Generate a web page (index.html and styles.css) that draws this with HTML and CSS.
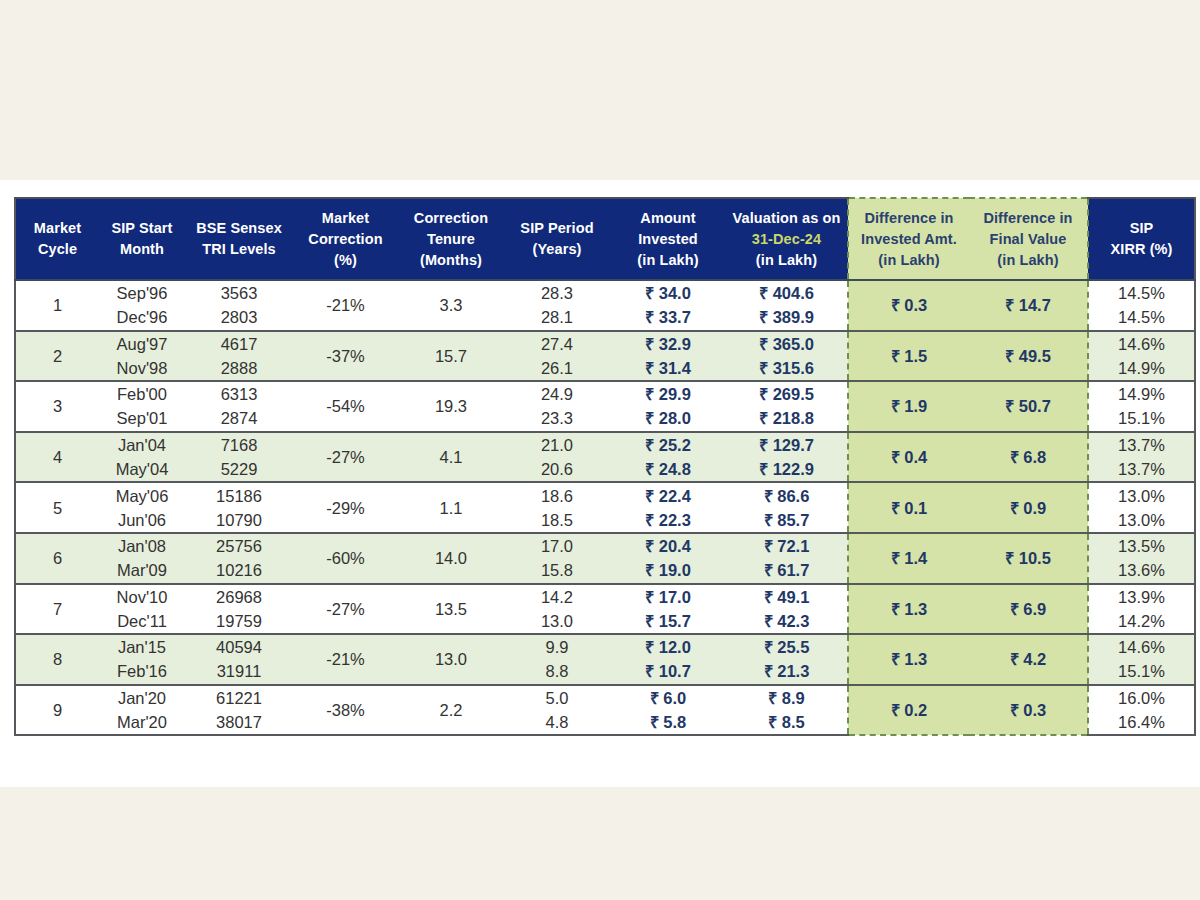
FILE: index.html
```html
<!DOCTYPE html>
<html>
<head>
<meta charset="utf-8">
<link rel="stylesheet" href="styles.css">
</head>
<body>
<div class="band top"></div>
<main class="sheet">
<table class="sip">
<colgroup>
<col style="width:84px"><col style="width:86px"><col style="width:108px"><col style="width:105px"><col style="width:106px"><col style="width:106px"><col style="width:116px"><col style="width:122px"><col style="width:121px"><col style="width:119px"><col style="width:107px">
</colgroup>
<thead>
<tr>
<th class="first">Market<br>Cycle</th>
<th>SIP Start<br>Month</th>
<th>BSE Sensex<br>TRI Levels</th>
<th>Market<br>Correction<br>(%)</th>
<th>Correction<br>Tenure<br>(Months)</th>
<th>SIP Period<br>(Years)</th>
<th>Amount<br>Invested<br>(in Lakh)</th>
<th>Valuation as on<br><span class="date">31-Dec-24</span><br>(in Lakh)</th>
<th class="hl hl-l">Difference in<br>Invested Amt.<br>(in Lakh)</th>
<th class="hl hl-r">Difference in<br>Final Value<br>(in Lakh)</th>
<th class="last">SIP<br>XIRR (%)</th>
</tr>
</thead>
<tbody>
<tr><td class="first">1</td><td>Sep'96<br>Dec'96</td><td>3563<br>2803</td><td>-21%</td><td>3.3</td><td>28.3<br>28.1</td><td class="amt">₹ 34.0<br>₹ 33.7</td><td class="amt">₹ 404.6<br>₹ 389.9</td><td class="hl hl-l amt">₹ 0.3</td><td class="hl hl-r amt">₹ 14.7</td><td class="last">14.5%<br>14.5%</td></tr>
<tr class="alt"><td class="first">2</td><td>Aug'97<br>Nov'98</td><td>4617<br>2888</td><td>-37%</td><td>15.7</td><td>27.4<br>26.1</td><td class="amt">₹ 32.9<br>₹ 31.4</td><td class="amt">₹ 365.0<br>₹ 315.6</td><td class="hl hl-l amt">₹ 1.5</td><td class="hl hl-r amt">₹ 49.5</td><td class="last">14.6%<br>14.9%</td></tr>
<tr><td class="first">3</td><td>Feb'00<br>Sep'01</td><td>6313<br>2874</td><td>-54%</td><td>19.3</td><td>24.9<br>23.3</td><td class="amt">₹ 29.9<br>₹ 28.0</td><td class="amt">₹ 269.5<br>₹ 218.8</td><td class="hl hl-l amt">₹ 1.9</td><td class="hl hl-r amt">₹ 50.7</td><td class="last">14.9%<br>15.1%</td></tr>
<tr class="alt"><td class="first">4</td><td>Jan'04<br>May'04</td><td>7168<br>5229</td><td>-27%</td><td>4.1</td><td>21.0<br>20.6</td><td class="amt">₹ 25.2<br>₹ 24.8</td><td class="amt">₹ 129.7<br>₹ 122.9</td><td class="hl hl-l amt">₹ 0.4</td><td class="hl hl-r amt">₹ 6.8</td><td class="last">13.7%<br>13.7%</td></tr>
<tr><td class="first">5</td><td>May'06<br>Jun'06</td><td>15186<br>10790</td><td>-29%</td><td>1.1</td><td>18.6<br>18.5</td><td class="amt">₹ 22.4<br>₹ 22.3</td><td class="amt">₹ 86.6<br>₹ 85.7</td><td class="hl hl-l amt">₹ 0.1</td><td class="hl hl-r amt">₹ 0.9</td><td class="last">13.0%<br>13.0%</td></tr>
<tr class="alt"><td class="first">6</td><td>Jan'08<br>Mar'09</td><td>25756<br>10216</td><td>-60%</td><td>14.0</td><td>17.0<br>15.8</td><td class="amt">₹ 20.4<br>₹ 19.0</td><td class="amt">₹ 72.1<br>₹ 61.7</td><td class="hl hl-l amt">₹ 1.4</td><td class="hl hl-r amt">₹ 10.5</td><td class="last">13.5%<br>13.6%</td></tr>
<tr><td class="first">7</td><td>Nov'10<br>Dec'11</td><td>26968<br>19759</td><td>-27%</td><td>13.5</td><td>14.2<br>13.0</td><td class="amt">₹ 17.0<br>₹ 15.7</td><td class="amt">₹ 49.1<br>₹ 42.3</td><td class="hl hl-l amt">₹ 1.3</td><td class="hl hl-r amt">₹ 6.9</td><td class="last">13.9%<br>14.2%</td></tr>
<tr class="alt"><td class="first">8</td><td>Jan'15<br>Feb'16</td><td>40594<br>31911</td><td>-21%</td><td>13.0</td><td>9.9<br>8.8</td><td class="amt">₹ 12.0<br>₹ 10.7</td><td class="amt">₹ 25.5<br>₹ 21.3</td><td class="hl hl-l amt">₹ 1.3</td><td class="hl hl-r amt">₹ 4.2</td><td class="last">14.6%<br>15.1%</td></tr>
<tr class="end"><td class="first">9</td><td>Jan'20<br>Mar'20</td><td>61221<br>38017</td><td>-38%</td><td>2.2</td><td>5.0<br>4.8</td><td class="amt">₹ 6.0<br>₹ 5.8</td><td class="amt">₹ 8.9<br>₹ 8.5</td><td class="hl hl-l amt">₹ 0.2</td><td class="hl hl-r amt">₹ 0.3</td><td class="last">16.0%<br>16.4%</td></tr>
</tbody>
</table>
</main>
<div class="band bottom"></div>
</body>
</html>
```
FILE: styles.css
```css
html, body {
  margin: 0;
  padding: 0;
  background: #f4f2e8;
  font-family: "Liberation Sans", Arial, sans-serif;
}
.band.top { height: 180px; }
.band.bottom { height: 113px; }
.sheet {
  background: #ffffff;
  height: 607px;
  padding: 17px 0 0 14px;
  box-sizing: border-box;
}
.sip {
  border-collapse: collapse;
  table-layout: fixed;
  width: 1180px;
}
.sip th {
  background: #11297a;
  color: #ffffff;
  font-weight: bold;
  font-size: 14.5px;
  letter-spacing: 0.1px;
  line-height: 21px;
  height: 82px;
  padding: 0;
  text-align: center;
  vertical-align: middle;
  border-top: 2px solid #4a4f5a;
  border-bottom: 2px solid #3d4a5a;
  box-sizing: border-box;
}
.sip th .date { color: #c9d86a; }
.sip th.hl {
  background: #d6e3a8;
  color: #2a4070;
  border-top: 2px dashed #6e8f4e;
}
.sip td {
  font-size: 16.5px;
  line-height: 24px;
  color: #333333;
  text-align: center;
  vertical-align: middle;
  height: 50.6px;
  padding: 0;
  border-bottom: 2px solid #55595e;
  box-sizing: border-box;
}
.sip tr.alt td { background: #e6efdb; }
.sip td.amt {
  color: #1f3866;
  font-weight: bold;
  font-size: 16.5px;
}
.sip td.hl, .sip tr.alt td.hl { background: #d6e3a8; }
.sip .hl-l { border-left: 2px dashed #6e8f4e; }
.sip .hl-r { border-right: 2px dashed #6e8f4e; }
.sip tr.end td { border-bottom: 2px solid #55595e; }
.sip tr.end td.hl { border-bottom: 2px dashed #6e8f4e; }
.sip .first { border-left: 2px solid #55595e; }
.sip .last { border-right: 2px solid #55595e; }
```
